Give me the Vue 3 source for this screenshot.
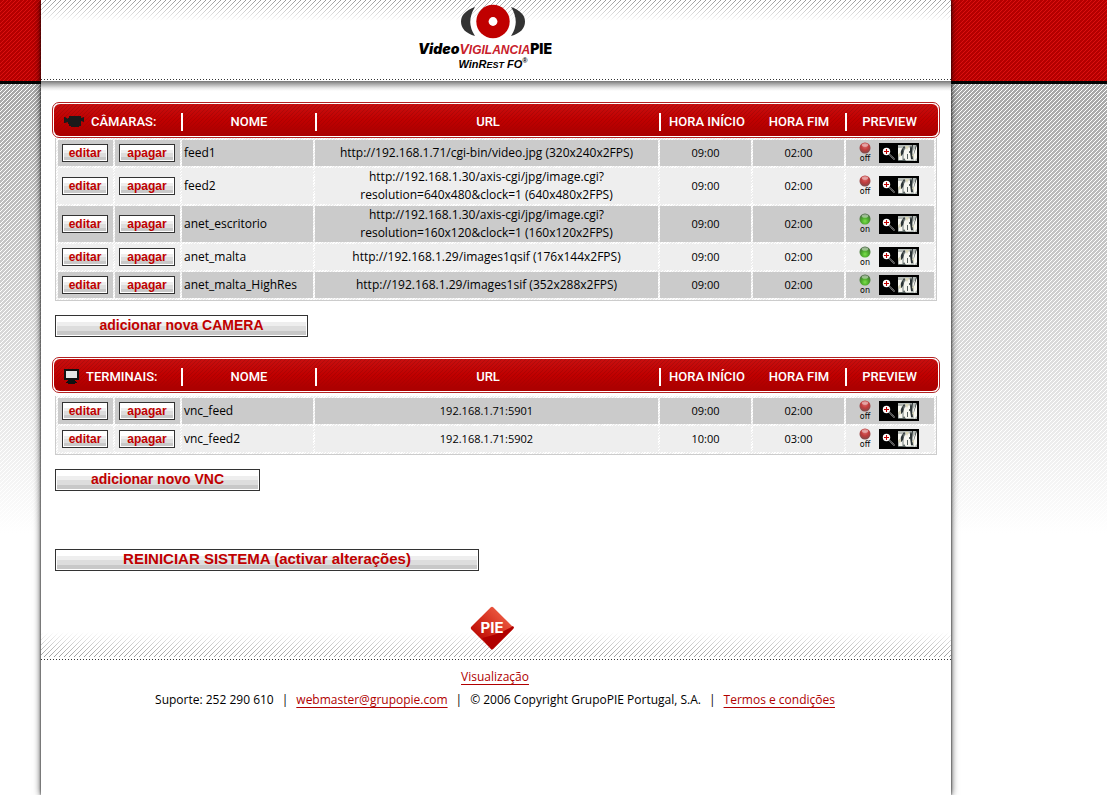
<script setup>
const groups = [
  {
    id: 'cam',
    title: 'CÂMARAS:',
    add: 'adicionar nova CAMERA',
    rows: [
      { name: 'feed1', url: ['http://192.168.1.71/cgi-bin/video.jpg (320x240x2FPS)'], start: '09:00', end: '02:00', on: false },
      { name: 'feed2', url: ['http://192.168.1.30/axis-cgi/jpg/image.cgi?', 'resolution=640x480&clock=1 (640x480x2FPS)'], start: '09:00', end: '02:00', on: false },
      { name: 'anet_escritorio', url: ['http://192.168.1.30/axis-cgi/jpg/image.cgi?', 'resolution=160x120&clock=1 (160x120x2FPS)'], start: '09:00', end: '02:00', on: true },
      { name: 'anet_malta', url: ['http://192.168.1.29/images1qsif (176x144x2FPS)'], start: '09:00', end: '02:00', on: true },
      { name: 'anet_malta_HighRes', url: ['http://192.168.1.29/images1sif (352x288x2FPS)'], start: '09:00', end: '02:00', on: true },
    ],
  },
  {
    id: 'vnc',
    title: 'TERMINAIS:',
    add: 'adicionar novo VNC',
    rows: [
      { name: 'vnc_feed', url: ['192.168.1.71:5901'], start: '09:00', end: '02:00', on: false },
      { name: 'vnc_feed2', url: ['192.168.1.71:5902'], start: '10:00', end: '03:00', on: false },
    ],
  },
]
</script>

<template>
  <div class="screen">
    <svg class="defs" aria-hidden="true">
      <defs>
        <radialGradient id="lamp-red" cx="50%" cy="35%" r="65%">
          <stop offset="0" stop-color="#d86a6a" /><stop offset="0.5" stop-color="#c23c3c" /><stop offset="1" stop-color="#7c4a4a" />
        </radialGradient>
        <radialGradient id="lamp-green" cx="50%" cy="70%" r="65%">
          <stop offset="0" stop-color="#7be04a" /><stop offset="0.5" stop-color="#4ca82c" /><stop offset="1" stop-color="#4a6a42" />
        </radialGradient>
        <linearGradient id="gem" x1="0" y1="0" x2="0" y2="1">
          <stop offset="0" stop-color="#e8523c" /><stop offset="0.5" stop-color="#d5301f" /><stop offset="1" stop-color="#c01008" />
        </linearGradient>
        <symbol id="thumb" viewBox="0 0 40 20">
          <rect width="40" height="20" fill="#000" />
          <rect x="19" y="2" width="19" height="16" fill="#b4bab6" />
          <path d="M19 5h4l-2 5-2 2zM25 8l3-4 4 1v12h-7zM34 8l4-5v12l-3 3zM20 13h3v4h-3z" fill="#f6f6f0" />
          <path d="M22 8l3-5 1 1-2 7-2 2zM31 2l1 3 1-3h1l-1 8 1 6h-2l-1-7zM37 2h1l-3 9-1 3z" fill="#2c3436" />
          <path d="M19 11l3-1v3l-2 1zM26 3h4l-2 4zM33 12l2-1v4z" fill="#d9d6b8" />
          <path d="M19 17h5l1-2 2 3h-8zM28 11h1v5h-1zM24 5h1v3h-1zM30 8h1v2h-1z" fill="#56605e" />
          <path d="M10.500 11.500l5 5" stroke="#aaa" stroke-width="1.600" stroke-dasharray="1 .5" />
          <circle cx="7.500" cy="8.500" r="3.700" fill="#fff" />
          <path d="M7.500 6v5M5 8.500h5" stroke="#c00000" stroke-width="1.100" />
        </symbol>
      </defs>
    </svg>

    <div class="page">
      <header class="top">
        <svg class="eye" width="66" height="38" viewBox="0 0 66 38" aria-hidden="true">
          <path d="M15 3Q1 8 1 17.500Q1 28 15 32Q5.500 18 15 3z" fill="#333" />
          <path d="M51 3Q65 8 65 17.500Q65 28 51 32Q60.500 18 51 3z" fill="#333" />
          <circle cx="33" cy="17.500" r="16.700" fill="#c00000" />
          <circle cx="33" cy="17.500" r="4.400" fill="#fff" />
        </svg>
        <h1 class="brand"><i>Video</i><i class="red">V<small>IGILANCIA</small></i><b>PIE</b></h1>
        <p class="sub">WinR<small>EST</small> FO<sup>®</sup></p>
      </header>

      <main class="content">
        <section v-for="g in groups" :key="g.id" :class="['group', g.id]">
          <div class="band">
            <div class="band-in">
              <h2 class="lead">
                <svg v-if="g.id === 'cam'" width="20" height="12" viewBox="0 0 20 12" aria-hidden="true">
                  <path d="M0 1h1l3 2V2h1V0h12v2l3-1v5l-3-1v5h-2v1H7v-1H5V8H4V6L1 7H0z" fill="#1a1a1a" />
                </svg>
                <svg v-else width="15" height="15" viewBox="0 0 15 15" aria-hidden="true">
                  <path d="M0 0h15v11h-4v1h1v1h1v1h-2v1H4v-1H2v-1h1v-1h1v-1H0z" fill="#111" />
                  <rect x="2" y="2" width="11" height="7" fill="#e4e4e4" />
                </svg>
                <span>{{ g.title }}</span>
              </h2>
              <span class="head bar">NOME</span>
              <span class="head bar">URL</span>
              <span class="head bar">HORA INÍCIO</span>
              <span class="head">HORA FIM</span>
              <span class="head bar last">PREVIEW</span>
            </div>
          </div>
          <table class="grid" :aria-label="g.title">
            <colgroup>
              <col class="c-edit"><col class="c-del"><col class="c-name"><col><col class="c-time"><col class="c-time"><col class="c-prev">
            </colgroup>
            <tbody>
              <tr v-for="r in g.rows" :key="r.name">
                <td><button class="btn small edit" type="button">editar</button></td>
                <td><button class="btn small del" type="button">apagar</button></td>
                <td class="name">{{ r.name }}</td>
                <td class="url"><span v-for="part in r.url" :key="part" class="line">{{ part }}</span></td>
                <td>{{ r.start }}</td>
                <td>{{ r.end }}</td>
                <td>
                  <div class="prev">
                    <span class="state">
                      <svg width="12" height="12" viewBox="0 0 12 12" aria-hidden="true">
                        <circle cx="6" cy="6" r="5.500" :fill="r.on ? 'url(#lamp-green)' : 'url(#lamp-red)'" />
                        <ellipse cx="6" cy="3" rx="3.300" ry="1.800" fill="#fff" opacity="0.45" />
                      </svg>
                      {{ r.on ? 'on' : 'off' }}
                    </span>
                    <a href="#" :aria-label="'Preview ' + r.name"><svg width="40" height="20"><use href="#thumb" /></svg></a>
                  </div>
                </td>
              </tr>
            </tbody>
          </table>
          <button :class="['btn', 'big', 'add-' + g.id]" type="button">{{ g.add }}</button>
        </section>
        <button class="btn big restart" type="button">REINICIAR SISTEMA (activar alterações)</button>
      </main>

      <div class="closing">
        <svg width="46" height="46" viewBox="0 0 46 46" role="img" aria-label="PIE">
          <rect x="7.500" y="7.500" width="31" height="31" rx="2" transform="rotate(45 23 23)" fill="url(#gem)" />
          <path d="M13 33Q32 29 44 21L45 22.500Q45 23 44 24L24 44Q23 45 22 44z" fill="#b00000" />
          <text x="23" y="28" text-anchor="middle" class="gem-text">PIE</text>
        </svg>
      </div>
      <footer class="foot">
        <p><a href="#">Visualização</a></p>
        <p class="legal">
          <span>Suporte: 252 290 610</span><span>|</span><a href="#">webmaster@grupopie.com</a><span>|</span><span>© 2006 Copyright GrupoPIE Portugal, S.A.</span><span>|</span><a href="#">Termos e condições</a>
        </p>
      </footer>
    </div>
  </div>
</template>

<style>
body { margin: 0; background: #fff; }
</style>

<style scoped>
.screen {
  --hatch-white: url("data:image/svg+xml,%3Csvg xmlns='http://www.w3.org/2000/svg' width='4' height='4' shape-rendering='crispEdges' fill='white'%3E%3Cpath d='M3 0h1v1h-1zM2 1h1v1h-1zM1 2h1v1h-1zM0 3h1v1h-1z'/%3E%3C/svg%3E");
  --hatch-red: url("data:image/svg+xml,%3Csvg xmlns='http://www.w3.org/2000/svg' width='4' height='4' shape-rendering='crispEdges' fill='%23dc1010'%3E%3Cpath d='M3 0h1v1h-1zM2 1h1v1h-1zM1 2h1v1h-1zM0 3h1v1h-1z'/%3E%3C/svg%3E");
  --hatch-dark: url("data:image/svg+xml,%3Csvg xmlns='http://www.w3.org/2000/svg' width='4' height='4' shape-rendering='crispEdges' fill='%23900000' fill-opacity='.7'%3E%3Cpath d='M3 0h1v1h-1zM2 1h1v1h-1zM1 2h1v1h-1zM0 3h1v1h-1z'/%3E%3C/svg%3E");
  --hatch-grey: url("data:image/svg+xml,%3Csvg xmlns='http://www.w3.org/2000/svg' width='5' height='5' shape-rendering='crispEdges' fill='%23999'%3E%3Cpath d='M4 0h1v1h-1zM3 1h1v1h-1zM2 2h1v1h-1zM1 3h1v1h-1zM0 4h1v1h-1z'/%3E%3C/svg%3E");
  --dots: repeating-linear-gradient(90deg, #333 0 1px, #fff 1px 3px);
  position: relative;
  display: flex;
  min-height: 100vh;
  padding-left: 41px;
  color: #000;
  font-family: "Open Sans", "Noto Sans", sans-serif;
  font-size: 11px;
  line-height: 18px;
  background:
    var(--hatch-white),
    linear-gradient(#a6a6a6, #fff) 0 83px / 100% 450px no-repeat,
    #fff;
}
.screen::before {
  content: "";
  position: absolute;
  inset: 0 0 auto 0;
  height: 81px;
  border-bottom: 3px solid #000;
  background: var(--hatch-red), #b40000;
}
.defs { position: absolute; width: 0; height: 0; }
.page {
  position: relative;
  flex: 1;
  max-width: 910px;
  background: #fff;
  box-shadow: 0 0 2px rgba(0, 0, 0, .8), 0 0 7px rgba(0, 0, 0, .8);
}
.top {
  display: flex;
  flex-direction: column;
  align-items: center;
  height: 91px;
  padding: 4px 6px 0 0;
  box-sizing: border-box;
  background:
    linear-gradient(rgba(255, 255, 255, 0), #fff) 0 0 / 100% 21px no-repeat,
    var(--dots) 0 79px / 100% 1px no-repeat,
    linear-gradient(#777, #aaa 3px, #e8e8e8 7px, #fff) 0 81px / 100% 10px no-repeat,
    linear-gradient(#fff, #fff) 0 21px / 100% 70px no-repeat,
    var(--hatch-grey);
}
.eye { flex: none; }
.brand {
  margin: 0;
  padding-right: 16px;
  font: 900 14px/13px "Inter", Arial, sans-serif;
  white-space: nowrap;
}
.brand b { font-weight: 900; }
.brand .red { color: #c8202a; font: italic bold 14px/13px "Liberation Sans", Arial, sans-serif; }
.brand small { font-size: 12px; }
.sub { margin: 1px 0 0; font: italic bold 11px/12px "Liberation Sans", Arial, sans-serif; }
.sub small { font-size: 9px; }
.sub sup { font-size: 7px; line-height: 0; }
.content { padding: 11px 11px 0; }
.group.vnc { margin-top: 20px; }
.band {
  padding: 1px;
  border: 1px solid #b22222;
  border-radius: 7px;
  background: #fff;
}
.band-in {
  display: grid;
  grid-template-columns: 127px 134px minmax(0, 1fr) 94px 92px 93px;
  align-items: center;
  box-sizing: border-box;
  height: 32px;
  padding-top: 3px;
  border-radius: 6px;
  background:
    linear-gradient(rgba(200, 50, 50, .3), rgba(184, 0, 0, .5) 50%, #ac0000 90%),
    var(--hatch-dark),
    #c80000;
  color: #fff;
  font-family: "Roboto", sans-serif;
}
.lead {
  display: flex;
  align-items: center;
  gap: 7px;
  margin: 0;
  padding-left: 10px;
  font-size: 13px;
  line-height: 18px;
  font-weight: 500;
  white-space: nowrap;
}
.head { font-size: 13px; line-height: 18px; font-weight: 500; text-align: center; white-space: nowrap; }
.bar { border-left: 2px solid #fff; }
.last { padding-right: 6px; }
.grid {
  width: calc(100% - 6px);
  margin: 0 3px;
  table-layout: fixed;
  border: 1px solid #ccc;
  border-top: 0;
  border-spacing: 2px;
  border-collapse: separate;
  background: repeating-linear-gradient(135deg, #fff 0 1px, #eee 1px 2px);
}
.vnc .grid { margin-top: 3px; }
.c-edit { width: 55px; }
.c-del { width: 65px; }
.c-name { width: 131px; }
.c-time { width: 91px; }
.c-prev { width: 88px; }
.grid td { height: 26px; padding: 0; text-align: center; background: #eee; }
.grid tr:nth-child(odd) td { background: #cbcbcb; }
.grid td.name { padding-left: 2px; text-align: left; font-size: 12px; }
.cam .url { font-size: 12px; }
.line { display: block; }
.prev { display: flex; justify-content: center; align-items: center; gap: 7px; padding-right: 3px; }
.prev a { display: block; height: 20px; }
.prev a svg { display: block; }
.state { display: flex; flex-direction: column; align-items: center; width: 14px; font-family: "DejaVu Sans", sans-serif; font-size: 8px; line-height: 10px; }
.btn {
  display: block;
  box-sizing: border-box;
  padding: 0;
  border: 1px solid #333;
  color: #c00000;
  font-family: "Liberation Sans", Arial, sans-serif;
  font-weight: bold;
  white-space: nowrap;
  box-shadow: inset 0 0 0 1px #fff;
  background: linear-gradient(#fff 0 30%, #eee 30% 50%, #ddd 50% 75%, #c8c8c8 75%);
}
.small { height: 18px; margin: 0 0 0 4px; font-size: 12px; line-height: 16px; }
.edit { width: 46px; }
.del { width: 56px; }
.big { height: 22px; margin: 14px 0 0 3px; padding-bottom: 2px; font-size: 14px; line-height: 18px; }
.add-cam { width: 253px; }
.add-vnc { width: 205px; }
.restart { width: 424px; margin-top: 58px; font-size: 15px; }
.closing {
  display: flex;
  justify-content: center;
  height: 55px;
  margin-top: 34px;
  padding-right: 9px;
  background:
    linear-gradient(#fff, rgba(255, 255, 255, 0)) 0 27px / 100% 26px no-repeat,
    linear-gradient(#fff, #fff) 0 0 / 100% 27px no-repeat,
    var(--dots) 0 54px / 100% 1px no-repeat,
    linear-gradient(#fff, #fff) 0 52px / 100% 3px no-repeat,
    var(--hatch-grey);
}
.gem-text { fill: #fff; font: bold 15px "Inter", sans-serif; }
.foot { padding: 5px 2px 0 0; font-size: 12px; line-height: 23px; text-align: center; }
.foot p { margin: 0; }
.foot a { color: #b00000; text-decoration: underline 1px; text-underline-offset: 3px; text-decoration-skip-ink: none; }
.foot .legal { display: flex; flex-wrap: wrap; justify-content: center; align-items: center; gap: 0 8px; }
</style>
